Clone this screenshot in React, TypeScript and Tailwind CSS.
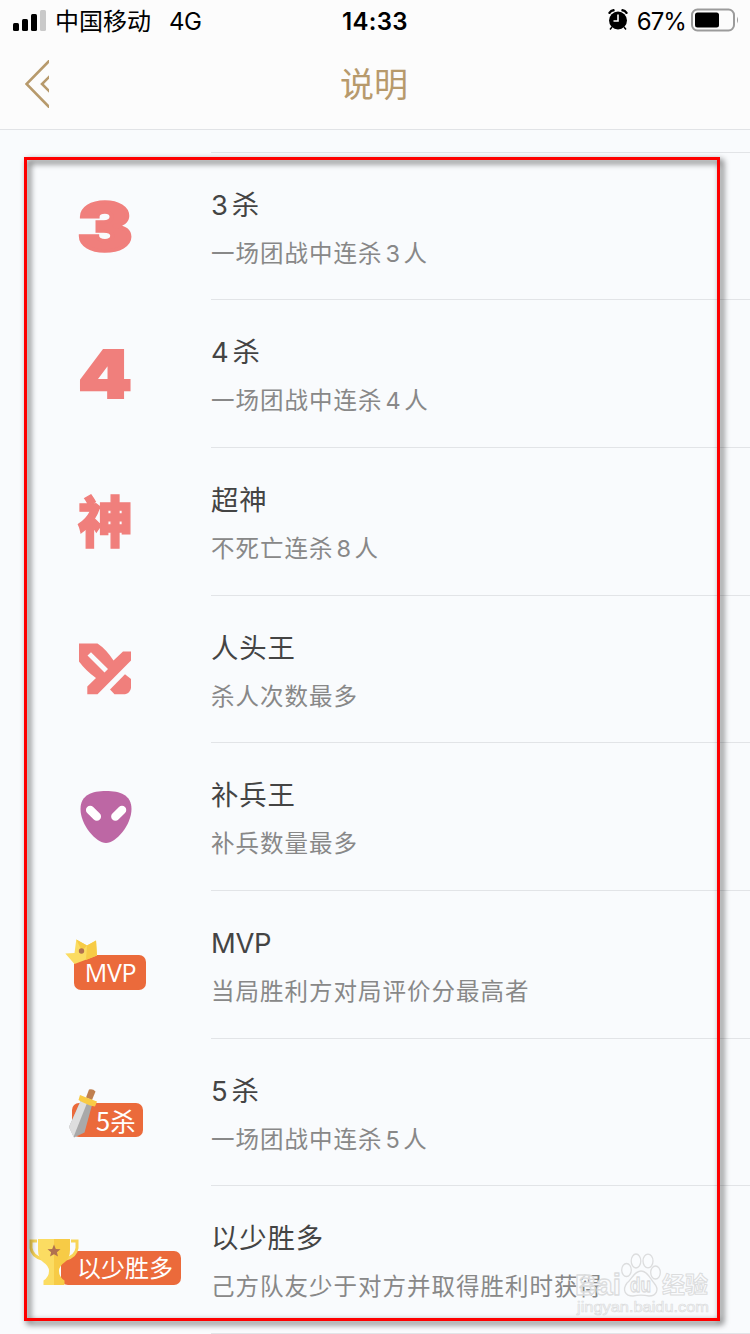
import React from 'react';

const PINK = '#f07f7c';
const FONT = "font-['Inter','Noto_Sans_CJK_SC',sans-serif]";

function GlyphIcon({ char, x, y, size, width, stroke }: { char: string; x: number; y: number; size: number; width: number; stroke: number }) {
  return (
    <svg className="overflow-visible" width="52" height="52" viewBox="0 0 52 52">
      <text
        x={x}
        y={y}
        fontSize={size}
        fontWeight="900"
        fontFamily="Inter, 'Noto Sans CJK SC', sans-serif"
        fill={PINK}
        stroke={PINK}
        strokeWidth={stroke}
        textLength={width}
        lengthAdjust="spacingAndGlyphs"
      >
        {char}
      </text>
    </svg>
  );
}

function SwordsIcon() {
  return (
    <svg width="52" height="52" viewBox="0 0 52 52" fill={PINK}>
      <path
        fillRule="evenodd"
        d="M0 .5H18.5Q27 6 34.500 17.500L44 8.500H52V17.500L18.500 51.300H8.300V43.500L17 35Q7 28 0 18.500ZM8.500 12.500 25.500 29.500 29 26 12 9.300Z"
      />
      <path d="M31 46.500 46 31.300 52 36V45Q51 50.500 46 51.300H35.500Z" />
    </svg>
  );
}

function AlienIcon() {
  return (
    <svg className="ml-px" width="52" height="54" viewBox="0 0 52 54">
      <path d="M26 1C40 1 51.500 5 51.500 19C51.500 35 36 53 26 53S.5 35 .5 19C.5 5 12 1 26 1Z" fill="#bd67a4" />
      <path d="M10.200 20 16.800 26.600M42 20 35.400 26.600" stroke="#fff" strokeWidth="8.500" strokeLinecap="round" />
    </svg>
  );
}

function MvpBadge() {
  return (
    <div className="relative h-14 w-40 pl-[49px] pt-[19px]">
      <div className="flex h-[35px] w-[72px] items-center justify-center rounded-[7px] bg-[#eb6a3b] pl-[1px] font-['Open_Sans',sans-serif] text-[25px] leading-none tracking-[-0.3px] text-white">
        MVP
      </div>
      <svg className="absolute left-[40px] top-[3px]" width="34" height="26" viewBox="0 0 34 26">
        <path d="M.3 14.500 9.500 14 11.300.5 22 6.500 31 1.500 32 16.500 9.500 25Z" fill="#fbdc62" />
        <path d="M22 6.500 31 1.500 32 16.500 21 21Z" fill="#f7cb46" />
        <path d="M11.300.5 22 6.500 17 12Z" fill="#f7cb46" />
        <circle cx="16.500" cy="12" r="2.700" fill="#b1714f" />
      </svg>
    </div>
  );
}

function SwordBadge() {
  return (
    <div className="relative h-14 w-40 pl-[47px] pt-[19px]">
      <div className="flex h-[34px] w-[71px] items-center rounded-[7px] bg-[#eb6a3b] pl-[24px] font-['Noto_Sans_CJK_SC',sans-serif] text-[25.500px] leading-none text-white">
        5杀
      </div>
      <svg className="absolute left-[43px] top-[4px]" width="30" height="50" viewBox="0 0 30 50">
        <path d="M13 12 24 17 16.500 44.500 6 49.500 1 39Z" fill="#a9a9a9" />
        <path d="M13 12 19 15 5.500 49 1 39Z" fill="#dedede" />
        <path d="M18 9.500 21 1.500Q25 .5 27.500 3.500L24 12Z" fill="#c08050" />
        <path d="M12 7 17 9 25 12 29 13.500 27 18.500 22 17.500 14 14 10.500 12Z" fill="#f9cb45" />
      </svg>
    </div>
  );
}

function TrophyBadge() {
  return (
    <div className="relative h-14 w-40 pl-[36px] pt-[19px]">
      <div className="flex h-[34px] w-[120px] items-center rounded-[7px] bg-[#eb6a3b] pb-px pl-[16px] font-['Noto_Sans_CJK_SC',sans-serif] text-[24px] leading-none text-white">
        以少胜多
      </div>
      <svg className="absolute left-[4px] top-[7px]" width="50" height="46" viewBox="0 0 50 46">
        <path d="M0 20V46H15L20 32 12 20Z" fill="#f9fbfd" />
        <path d="M41 2H48V9Q47 17 37 20Z" fill="#f9fbfd" />
        <path d="M8 2H2V9Q3 17 13 20M42 2H48V9Q47 17 37 20" fill="none" stroke="#f8d558" strokeWidth="3" />
        <path d="M9 0H25V46H14.500V41.500Q20 38 20 32 20 27 14 23 9 19 9 11Z" fill="#fbdc62" />
        <path d="M25 0H41V11Q41 19 36 23 30 27 30 32 30 38 35.500 41.500V46H25Z" fill="#f7cb46" />
        <path d="M25 5.500 26.800 10 31.500 10.300 27.900 13.200 29 17.500 25 15.200 21 17.500 22.100 13.200 18.500 10.300 23.200 10Z" fill="#b1714f" />
      </svg>
    </div>
  );
}

const rows: { title: string; desc: string; icon: React.ReactNode }[] = [
  { title: '3杀', desc: '一场团战中连杀3人', icon: <GlyphIcon char="3" x={-1} y={50} size={65} width={54} stroke={3.5} /> },
  { title: '4杀', desc: '一场团战中连杀4人', icon: <GlyphIcon char="4" x={-1} y={49.5} size={66} width={54} stroke={2} /> },
  { title: '超神', desc: '不死亡连杀8人', icon: <GlyphIcon char="神" x={-1} y={46.5} size={55} width={55} stroke={1.3} /> },
  { title: '人头王', desc: '杀人次数最多', icon: <SwordsIcon /> },
  { title: '补兵王', desc: '补兵数量最多', icon: <AlienIcon /> },
  { title: 'MVP', desc: '当局胜利方对局评价分最高者', icon: <MvpBadge /> },
  { title: '5杀', desc: '一场团战中连杀5人', icon: <SwordBadge /> },
  { title: '以少胜多', desc: '己方队友少于对方并取得胜利时获得', icon: <TrophyBadge /> },
];

function StatusBar() {
  return (
    <div className="grid h-10 grid-cols-3 items-center pt-px text-[24px] leading-none text-black">
      <div className="flex items-center pl-[13px]">
        <svg className="-mt-px" width="33" height="21" viewBox="0 0 33 21">
          <rect x="0" y="13" width="6" height="8" rx="1.500" />
          <rect x="9" y="9" width="6" height="12" rx="1.500" />
          <rect x="18" y="4" width="6" height="17" rx="1.500" />
          <rect x="27" y="0" width="6" height="21" rx="1.500" fill="#c9c9c9" />
        </svg>
        <span className="ml-[9px] pt-[2px]">中国移动</span>
        <span className="ml-[18px] pt-[2px] tracking-[-0.5px]">4G</span>
      </div>
      <div className="pt-[2px] text-center font-semibold tracking-[0.3px]">14:33</div>
      <div className="flex items-center justify-end pr-[11px]">
        <svg className="-mt-px" width="20" height="22" viewBox="0 0 20 22">
          <circle cx="10" cy="11.500" r="9" />
          <path d="M1.500 3.800Q3 1.500 5.500 1.300M18.500 3.800Q17 1.500 14.500 1.300" stroke="#000" strokeWidth="2.400" strokeLinecap="round" fill="none" />
          <path d="M4 18 2 20.500M16 18 18 20.500" stroke="#000" strokeWidth="1.500" />
          <path d="M10 5.500V12H5.500" fill="none" stroke="#fff" strokeWidth="1.600" />
        </svg>
        <span className="ml-[9px] pt-[2px] tracking-[-0.9px]">67%</span>
        <svg className="-mt-px ml-[5px]" width="48" height="24" viewBox="0 0 48 24">
          <rect x="1" y="1.500" width="42" height="21" rx="5.500" fill="none" stroke="#9b9b9b" strokeWidth="2" />
          <rect x="4" y="4.500" width="24" height="15" rx="2.500" />
          <path d="M46 8.500Q48 12 46 15.500Z" fill="#9b9b9b" />
        </svg>
      </div>
    </div>
  );
}

function Spaced({ text, className }: { text: string; className: string }) {
  return (
    <>
      {text.split(/(\d)/).map((part, i) => (/^\d$/.test(part) ? <span key={i} className={className}>{part}</span> : part))}
    </>
  );
}

function Watermark() {
  return (
    <svg className="absolute left-[574px] top-[1250px]" width="140" height="70" viewBox="0 0 140 70">
      <g fill="#fbfcfd" fillOpacity="0.7" stroke="#dcddde" strokeWidth="1.300" strokeLinejoin="round" fontWeight="700">
        <text x="1" y="45" fontSize="30" fontFamily="'Liberation Sans', sans-serif" textLength="46" lengthAdjust="spacingAndGlyphs">Bai</text>
        <ellipse cx="52.500" cy="20" rx="4.800" ry="6.500" />
        <ellipse cx="62" cy="11" rx="4.800" ry="7" />
        <ellipse cx="74" cy="11" rx="5" ry="6.800" />
        <ellipse cx="81.500" cy="22.500" rx="4.800" ry="6.500" />
        <path d="M67 21C74 21 76 29 80 33 86 40 82 46 75 46 70 45 64 45 59 46 51 46 48 40 53 33 58 29 60 21 67 21Z" />
        <text x="56" y="42" fontSize="20" fontFamily="'Liberation Sans', sans-serif" textLength="21" lengthAdjust="spacingAndGlyphs">du</text>
        <text x="88" y="43" fontSize="23" strokeWidth="1" fontFamily="'Noto Sans CJK SC', sans-serif">经验</text>
        <text x="3" y="62" fontSize="15" strokeWidth="0.7" fontFamily="'Liberation Sans', sans-serif" fontWeight="400" textLength="132" lengthAdjust="spacingAndGlyphs">jingyan.baidu.com</text>
      </g>
    </svg>
  );
}

export default function App() {
  return (
    <div className={`relative h-[1334px] w-[750px] overflow-hidden bg-[#f9fbfd] ${FONT}`}>
      <header className="h-[130px] border-b border-[#e1e3e6] bg-[#fcfcfc]">
        <StatusBar />
        <div className="grid h-[88px] grid-cols-3 items-center">
          <svg className="ml-[25px]" width="24" height="48" viewBox="0 0 24 48">
            <path d="M25 0 1.500 24 25 48M25 16 17 24 25 32" fill="none" stroke="#b79a6c" strokeWidth="2.600" />
          </svg>
          <h1 className="-mt-[2px] pr-[2px] text-center font-['Noto_Sans_CJK_SC',sans-serif] text-[34px] leading-none text-[#b79a6c]">说明</h1>
        </div>
      </header>
      <main className="pt-[21.6px]">
        {rows.map((row) => (
          <section key={row.title} className="flex h-[147.66px]">
            <div className="flex w-[211px] items-center justify-center pr-px pt-px">{row.icon}</div>
            <div className="flex-1 border-t border-[#e2e4e7] pt-[36.2px]">
              <h2 className={`text-[27.4px] leading-[32px] text-[#444] ${row.title === 'MVP' ? 'tracking-[-0.3px]' : 'tracking-[0.9px]'}`}>
                <Spaced text={row.title} className="mr-[3px]" />
              </h2>
              <p className="mt-[18px] text-[23.5px] leading-[30px] tracking-[1px] text-[#888]">
                <Spaced text={row.desc} className="ml-[3px] mr-[2.5px]" />
              </p>
            </div>
          </section>
        ))}
        <div className="ml-[211px] border-t border-[#e2e4e7]" />
      </main>
      <Watermark />
      <div className="absolute left-[24px] top-[157px] h-[1164px] w-[696px] border-[3px] border-[#fe0000] drop-shadow-[3px_3px_3px_rgba(0,0,0,0.75)]" />
    </div>
  );
}
